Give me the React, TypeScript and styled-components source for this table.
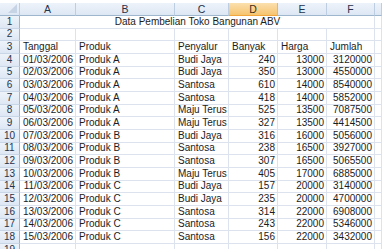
import { Fragment } from "react";
import styled, { createGlobalStyle, css } from "styled-components";

const GlobalStyle = createGlobalStyle`
  html, body {
    margin: 0;
    padding: 0;
    background: #ffffff;
    overflow: hidden;
  }
`;

type Row = [string, string, string, number, number, number];

const rows: Row[] = [
  ["01/03/2006", "Produk A", "Budi Jaya", 240, 13000, 3120000],
  ["02/03/2006", "Produk A", "Budi Jaya", 350, 13000, 4550000],
  ["03/03/2006", "Produk A", "Santosa", 610, 14000, 8540000],
  ["04/03/2006", "Produk A", "Santosa", 418, 14000, 5852000],
  ["05/03/2006", "Produk A", "Maju Terus", 525, 13500, 7087500],
  ["06/03/2006", "Produk A", "Maju Terus", 327, 13500, 4414500],
  ["07/03/2006", "Produk B", "Budi Jaya", 316, 16000, 5056000],
  ["08/03/2006", "Produk B", "Santosa", 238, 16500, 3927000],
  ["09/03/2006", "Produk B", "Santosa", 307, 16500, 5065500],
  ["10/03/2006", "Produk B", "Maju Terus", 405, 17000, 6885000],
  ["11/03/2006", "Produk C", "Budi Jaya", 157, 20000, 3140000],
  ["12/03/2006", "Produk C", "Budi Jaya", 235, 20000, 4700000],
  ["13/03/2006", "Produk C", "Santosa", 314, 22000, 6908000],
  ["14/03/2006", "Produk C", "Santosa", 243, 22000, 5346000],
  ["15/03/2006", "Produk C", "Santosa", 156, 22000, 3432000],
];

const columns = ["A", "B", "C", "D", "E", "F", ""];
const selectedColumn = "D";

const Sheet = styled.div`
  display: grid;
  grid-template-columns: 20px 56px 99px 54px 49px 49px 48px 1fr;
  grid-template-rows: 13px;
  grid-auto-rows: 12.67px;
  padding-top: 3px;
  width: 382px;
  font-family: "Liberation Sans", Arial, sans-serif;
  font-size: 10px;
  color: #1c1c1c;
`;

const headerBase = css`
  background: linear-gradient(#eef3fa, #dde7f4);
  border-right: 1px solid #bdcde2;
  border-bottom: 1px solid #9eb6ce;
  color: #27334a;
  display: flex;
  align-items: center;
  justify-content: center;
  line-height: 1;
  box-sizing: border-box;
`;

const Corner = styled.div`
  ${headerBase};
  justify-content: flex-end;
  align-items: flex-end;
  padding: 0 2px 2px 0;

  &::after {
    content: "";
    width: 0;
    height: 0;
    border-left: 9px solid transparent;
    border-bottom: 9px solid #c6d4e6;
  }
`;

const ColHeader = styled.div<{ $selected?: boolean }>`
  ${headerBase};
  font-size: 10.5px;
  ${({ $selected }) =>
    $selected &&
    css`
      background: linear-gradient(#fbe0ae, #f6c470);
      border-right-color: #f2b35a;
      border-bottom-color: #f2a63c;
      color: #3a2f1a;
    `}
`;

const RowHeader = styled.div`
  ${headerBase};
  border-bottom-color: #c9d6e8;
  border-right-color: #9eb6ce;
`;

const Cell = styled.div<{ $align?: "left" | "right" | "center"; $span?: number }>`
  box-sizing: border-box;
  border-right: 1px solid #dde3ee;
  border-bottom: 1px solid #dde3ee;
  display: flex;
  align-items: center;
  justify-content: ${({ $align }) =>
    $align === "right" ? "flex-end" : $align === "center" ? "center" : "flex-start"};
  padding: 0 2px 0 3px;
  white-space: nowrap;
  overflow: hidden;
  line-height: 1;
  grid-column: span ${({ $span }) => $span ?? 1};
`;

const App = () => {
  const body: (string | number)[][] = [
    ["Tanggal", "Produk", "Penyalur", "Banyak", "Harga", "Jumlah", ""],
    ...rows.map((r) => [...r, ""]),
    ["", "", "", "", "", "", ""],
  ];

  return (
    <>
      <GlobalStyle />
      <Sheet>
        <Corner />
        {columns.map((c, i) => (
          <ColHeader key={i} $selected={c === selectedColumn}>
            {c}
          </ColHeader>
        ))}

        <RowHeader>1</RowHeader>
        <Cell $align="center" $span={6}>
          Data Pembelian Toko Bangunan ABV
        </Cell>
        <Cell />

        <RowHeader>2</RowHeader>
        {columns.map((_, i) => (
          <Cell key={i} />
        ))}

        {body.map((row, r) => (
          <Fragment key={r}>
            <RowHeader>{r + 3}</RowHeader>
            {row.map((v, i) => (
              <Cell
                key={i}
                $align={r > 0 && (i === 0 || typeof v === "number") ? "right" : "left"}
              >
                {v}
              </Cell>
            ))}
          </Fragment>
        ))}
      </Sheet>
    </>
  );
};

export default App;
